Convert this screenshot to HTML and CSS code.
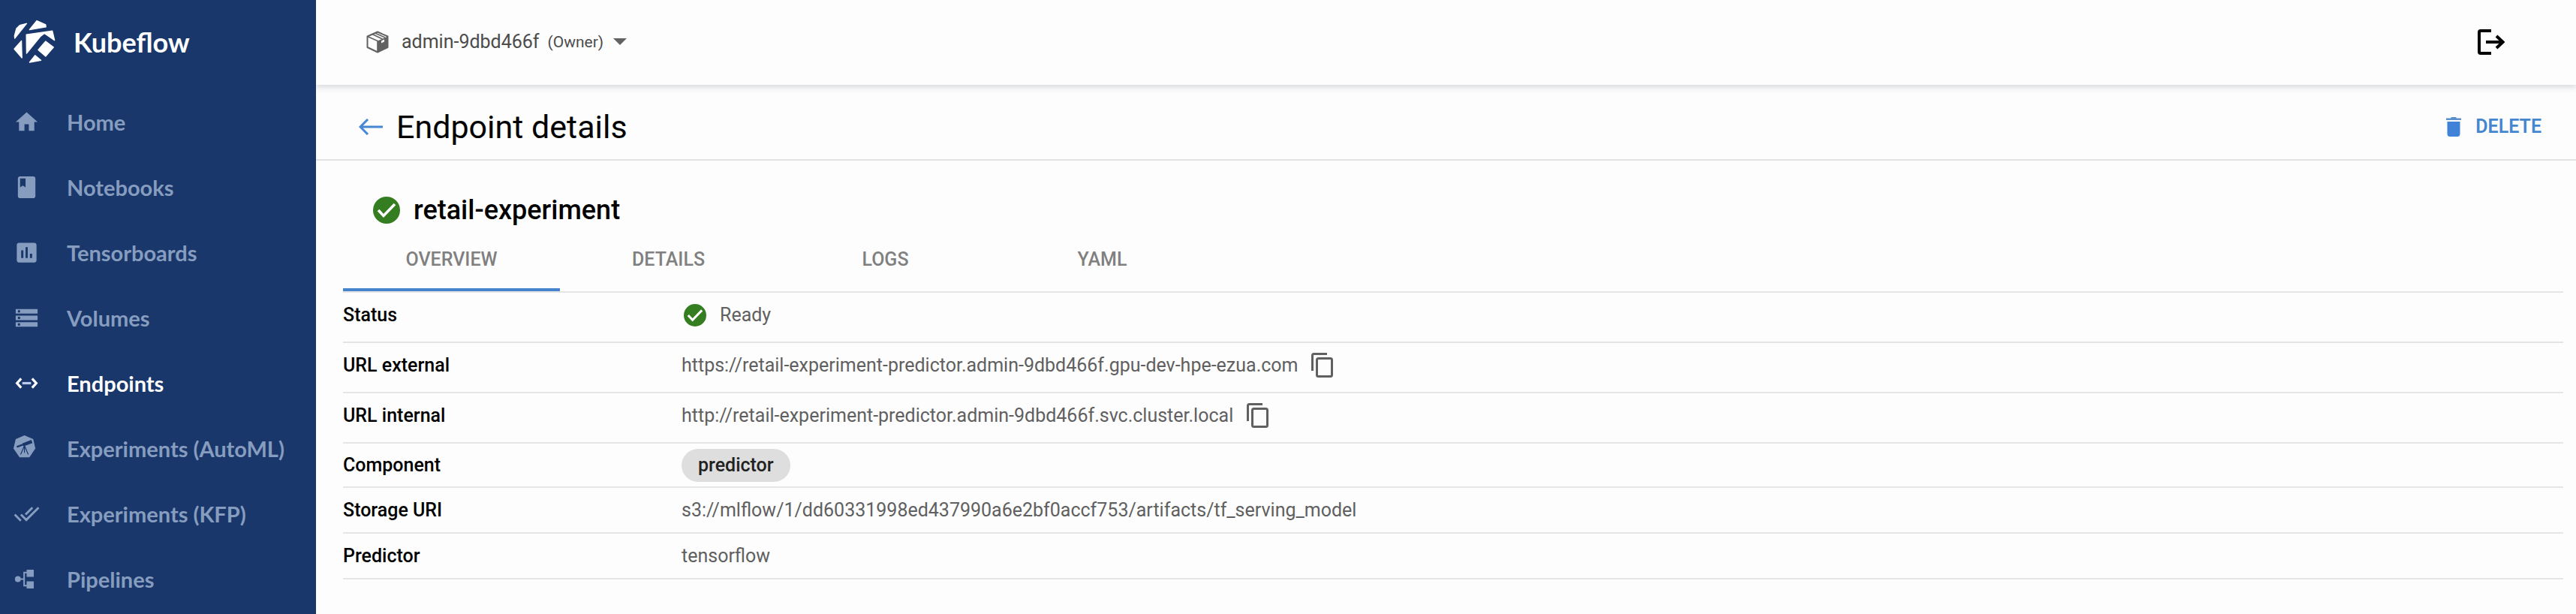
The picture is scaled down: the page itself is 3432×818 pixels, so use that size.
FILE: index.html
```html
<!DOCTYPE html>
<html lang="en">
<head>
<meta charset="utf-8">
<title>Kubeflow - Endpoint details</title>
<link rel="stylesheet" href="styles.css">
</head>
<body>
<div class="app">
  <aside class="sidebar">
    <a class="brand" href="#">
      <svg class="brand-logo" viewBox="54 80 170 176" fill="currentColor" stroke="currentColor" stroke-width="4" stroke-linejoin="round" aria-hidden="true">
        <path d="M107 93L59 153L58 143L66 113L80 100Z"/>
        <path d="M148 82L184 98L185 107L119 118Z"/>
        <path d="M106 138L211 123L220 161L179 133L164 144L107 214Z"/>
        <path d="M86 163L88 232L57 196Z"/>
        <path d="M184 165L216 189L184 226L154 200Z"/>
        <path d="M141 222L165 242L119 250Z"/>
      </svg>
      <span>Kubeflow</span>
    </a>
    <nav class="nav">
      <a class="nav-item" href="#">
        <svg class="nav-icon" viewBox="0 0 24 24" fill="currentColor" aria-hidden="true"><path d="M10 20v-6h4v6h5v-8h3L12 3 2 12h3v8z"/></svg>
        <span>Home</span>
      </a>
      <a class="nav-item" href="#">
        <svg class="nav-icon" viewBox="0 0 24 24" fill="currentColor" aria-hidden="true"><path d="M18 2H6c-1.100 0-2 .9-2 2v16c0 1.100.9 2 2 2h12c1.100 0 2-.9 2-2V4c0-1.100-.9-2-2-2zM6 4h5v8l-2.500-1.500L6 12V4z"/></svg>
        <span>Notebooks</span>
      </a>
      <a class="nav-item" href="#">
        <svg class="nav-icon" viewBox="0 0 24 24" fill="currentColor" aria-hidden="true"><path d="M19 3H5c-1.100 0-2 .9-2 2v14c0 1.100.9 2 2 2h14c1.100 0 2-.9 2-2V5c0-1.100-.9-2-2-2zM9 17H7v-7h2v7zm4 0h-2V7h2v10zm4 0h-2v-4h2v4z"/></svg>
        <span>Tensorboards</span>
      </a>
      <a class="nav-item" href="#">
        <svg class="nav-icon" viewBox="0 0 24 24" fill="currentColor" aria-hidden="true"><path d="M2 20h20v-4H2v4zm2-3h2v2H4v-2zM2 4v4h20V4H2zm4 3H4V5h2v2zm-4 7h20v-4H2v4zm2-3h2v2H4v-2z"/></svg>
        <span>Volumes</span>
      </a>
      <a class="nav-item active" href="#" aria-current="page">
        <svg class="nav-icon" viewBox="0 0 24 24" fill="none" stroke="currentColor" stroke-width="2.200" aria-hidden="true"><path d="M7 7.800L3.200 12L7 16.200M17 7.800L20.800 12L17 16.200"/><path d="M8 12h8" stroke="#b9cbe8"/></svg>
        <span>Endpoints</span>
      </a>
      <a class="nav-item" href="#">
        <svg class="nav-icon" viewBox="0 0 24 24" aria-hidden="true">
          <path fill="currentColor" d="M10 0L18 3.500L20 12L14.500 20H5.500L0 12L2 3.500Z"/>
          <g fill="none" stroke="#19376b"><path d="M3 10.500L10 8" stroke-width="1.600"/><path d="M8.500 8.700L16.800 5.600" stroke-width="3"/><path d="M10 9.500L6.500 17.500M10 9.500V16M10 9.500L13.500 17.500" stroke-width=".8"/></g>
        </svg>
        <span>Experiments (AutoML)</span>
      </a>
      <a class="nav-item" href="#">
        <svg class="nav-icon" viewBox="0 0 24 24" fill="currentColor" aria-hidden="true"><path d="M18 7l-1.410-1.410-6.340 6.340 1.410 1.410L18 7zm4.240-1.410L11.660 16.170 7.480 12l-1.410 1.410L11.660 19l12-12-1.420-1.410zM.410 13.410L6 19l1.410-1.410L1.830 12 .410 13.410z"/></svg>
        <span>Experiments (KFP)</span>
      </a>
      <a class="nav-item" href="#">
        <svg class="nav-icon" viewBox="0 0 24 24" fill="currentColor" aria-hidden="true"><circle cx="4" cy="12" r="2.700"/><path d="M12 3.500h6.500v6.500H12zM12 14h6.500v6.500H12z"/><path d="M5 12h4.500M13 6H9.700v12H13" fill="none" stroke="currentColor" stroke-width="1.400"/></svg>
        <span>Pipelines</span>
      </a>
    </nav>
  </aside>

  <div class="main">
    <header class="topbar">
      <button class="namespace" type="button">
        <svg class="cube" viewBox="0 0 30 30" aria-hidden="true">
          <path d="M15 1.500L28.500 7.500V22L15 28.500L1.500 22V7.500Z" fill="none" stroke="currentColor" stroke-width="2" stroke-linejoin="round"/>
          <path d="M15 13.500L28.500 7.500V22L15 28.500Z" fill="currentColor"/>
          <path d="M1.500 7.500L15 13.500V28M8 4.500L21.500 11M11.500 3L25 9" fill="none" stroke="currentColor" stroke-width="1.600"/>
          <path d="M20 13.500L24 11.500V14.500L20 16.500Z" fill="#fdfdfd"/>
        </svg>
        <span class="ns-name">admin-9dbd466f</span>
        <span class="ns-role">(Owner)</span>
        <svg class="caret" viewBox="0 0 18 9" fill="currentColor" aria-hidden="true"><path d="M0 0H18L9 9Z"/></svg>
      </button>
      <button class="logout" type="button" aria-label="Log out">
        <svg viewBox="0 0 36 34" fill="none" stroke="currentColor" stroke-width="4" aria-hidden="true"><path d="M18 2H4Q2 2 2 4V30Q2 32 4 32H18M11 17H33M25 9L33.500 17L25 25"/></svg>
      </button>
    </header>

    <div class="titlebar">
      <button class="back" type="button" aria-label="Back">
        <svg viewBox="0 0 32 22" fill="none" stroke="currentColor" stroke-width="3" aria-hidden="true"><path d="M32 11H2M12 1L2 11L12 21"/></svg>
      </button>
      <h1 class="page-title">Endpoint details</h1>
      <button class="delete" type="button">
        <svg viewBox="0 0 20 26" aria-hidden="true"><path d="M1.500 6H18.500V22Q18.500 26 15 26H5Q1.500 26 1.500 22Z" fill="#3f82d8"/><path d="M0 1.500H6L7 0H13L14 1.500H20V4H0Z" fill="#5b8fce"/></svg>
        <span>DELETE</span>
      </button>
    </div>

    <main class="content">
      <div class="endpoint">
        <svg class="status-lg" viewBox="0 0 36 36" aria-hidden="true"><circle cx="18" cy="18" r="18" fill="#347d20"/><path d="M7 18L14 25.500L29 10" fill="none" stroke="#fff" stroke-width="3.600"/></svg>
        <h2 class="endpoint-name">retail-experiment</h2>
      </div>
      <div class="tabs" role="tablist">
        <button class="tab selected" type="button" role="tab" aria-selected="true">OVERVIEW</button>
        <button class="tab" type="button" role="tab">DETAILS</button>
        <button class="tab" type="button" role="tab">LOGS</button>
        <button class="tab" type="button" role="tab">YAML</button>
      </div>
      <table class="details">
        <tbody>
          <tr class="tall">
            <th scope="row">Status</th>
            <td><div class="value"><svg class="status-sm" viewBox="0 0 36 36" aria-hidden="true"><circle cx="18" cy="18" r="18" fill="#347d20"/><path d="M7 18L14 25.500L29 10" fill="none" stroke="#fff" stroke-width="3.600"/></svg><span>Ready</span></div></td>
          </tr>
          <tr class="tall">
            <th scope="row">URL external</th>
            <td><div class="value"><span>https://retail-experiment-predictor.admin-9dbd466f.gpu-dev-hpe-ezua.com</span><button class="copy" type="button" aria-label="Copy external URL"><svg viewBox="0 0 29 33" fill="none" stroke="currentColor" stroke-width="3" aria-hidden="true"><path d="M21 1.500H3.500Q1.500 1.500 1.500 3.500V24"/><rect x="7.500" y="7.500" width="20" height="24" rx="2"/></svg></button></div></td>
          </tr>
          <tr class="tall">
            <th scope="row">URL internal</th>
            <td><div class="value"><span>http://retail-experiment-predictor.admin-9dbd466f.svc.cluster.local</span><button class="copy" type="button" aria-label="Copy internal URL"><svg viewBox="0 0 29 33" fill="none" stroke="currentColor" stroke-width="3" aria-hidden="true"><path d="M21 1.500H3.500Q1.500 1.500 1.500 3.500V24"/><rect x="7.500" y="7.500" width="20" height="24" rx="2"/></svg></button></div></td>
          </tr>
          <tr class="short">
            <th scope="row">Component</th>
            <td><span class="chip">predictor</span></td>
          </tr>
          <tr>
            <th scope="row">Storage URI</th>
            <td>s3://mlflow/1/dd60331998ed437990a6e2bf0accf753/artifacts/tf_serving_model</td>
          </tr>
          <tr>
            <th scope="row">Predictor</th>
            <td>tensorflow</td>
          </tr>
        </tbody>
      </table>
    </main>
  </div>
</div>
</body>
</html>
```
FILE: styles.css
```css
* {
  box-sizing: border-box;
}

body {
  margin: 0;
  background: #fdfdfd;
  color: #000;
  font-family: Roboto, "Liberation Sans", sans-serif;
  font-size: 25px;
  line-height: 32px;
}

button {
  padding: 0;
  border: 0;
  background: none;
  color: inherit;
  font: inherit;
  cursor: pointer;
}

svg {
  display: block;
  flex: none;
}

.app {
  display: flex;
  min-height: 100vh;
}

/* Sidebar */

.sidebar {
  flex: none;
  width: 421px;
  background: #19376b;
  font-family: Lato, "Open Sans", sans-serif;
  font-weight: 700;
}

.brand {
  display: flex;
  align-items: center;
  gap: 24px;
  height: 112px;
  padding-left: 18px;
  color: #fff;
  font-size: 36px;
  text-decoration: none;
}

.brand-logo {
  width: 56px;
  height: 58px;
}

.nav {
  display: flex;
  flex-direction: column;
  padding-top: 7px;
}

.nav-item {
  display: flex;
  align-items: center;
  gap: 36px;
  height: 87px;
  padding-left: 18px;
  color: #879dbf;
  font-size: 29px;
  text-decoration: none;
}

.nav-item.active {
  color: #fff;
}

.nav-icon {
  width: 35px;
  height: 35px;
}

/* Top bars */

.main {
  flex: 1;
  min-width: 0;
}

.topbar {
  display: flex;
  align-items: center;
  justify-content: space-between;
  height: 113px;
  padding: 0 95px 2px 67px;
  box-shadow: 0 2px 8px 1px rgba(40, 50, 70, 0.18);
  clip-path: inset(0 0 -16px 0);
}

.namespace {
  display: flex;
  align-items: center;
  color: #4c4c4c;
}

.cube {
  width: 30px;
  height: 30px;
  margin-right: 17px;
  color: #626262;
}

.ns-role {
  margin-left: 11px;
  font-size: 21px;
}

.caret {
  width: 18px;
  height: 9px;
  margin-left: 13px;
  color: #626262;
}

.logout svg {
  width: 36px;
  height: 34px;
}

.titlebar {
  display: flex;
  align-items: center;
  height: 101px;
  padding: 12px 46px 0 57px;
  border-bottom: 2px solid #e2e2e4;
}

.back {
  color: #4587d3;
}

.back svg {
  width: 32px;
  height: 22px;
}

.page-title {
  margin: 0 0 0 18px;
  font-size: 43px;
  font-weight: 400;
  line-height: 52px;
}

.delete {
  display: flex;
  align-items: center;
  gap: 19px;
  margin-left: auto;
  color: #4587cf;
  font-weight: 600;
}

.delete svg {
  width: 20px;
  height: 26px;
}

/* Endpoint content */

.content {
  padding: 42px 17px 0 36px;
}

.endpoint {
  display: flex;
  align-items: center;
  gap: 18px;
  padding-left: 40px;
}

.status-lg {
  width: 36px;
  height: 36px;
}

.endpoint-name {
  margin: 0;
  font-size: 36px;
  font-weight: 500;
  line-height: 48px;
}

.tabs {
  display: flex;
  border-bottom: 2px solid #e5e5e5;
}

.tab {
  width: 289px;
  height: 84px;
  border-top: 4px solid transparent;
  border-bottom: 4px solid transparent;
  color: #808080;
  font-weight: 500;
}

.tab.selected {
  border-bottom-color: #4583cc;
}

.details {
  width: 100%;
  border-collapse: separate;
  border-spacing: 0;
  table-layout: fixed;
}

.details th,
.details td {
  height: 61px;
  padding: 0;
  border-bottom: 2px solid #e5e5e5;
  text-align: left;
  vertical-align: middle;
}

.details th {
  width: 451px;
  font-weight: 500;
}

.details td {
  color: #606060;
}

.details .tall th,
.details .tall td {
  height: 67px;
  padding-bottom: 6px;
}

.details .short th,
.details .short td {
  height: 59px;
}

.value {
  display: flex;
  align-items: center;
  gap: 18px;
}

.status-sm {
  width: 30px;
  height: 30px;
  margin-left: 3px;
}

.copy {
  color: #606060;
}

.copy svg {
  width: 29px;
  height: 33px;
}

.chip {
  display: inline-block;
  padding: 6px 22px;
  border-radius: 22px;
  background: #dedede;
  color: #222;
  font-weight: 500;
  vertical-align: middle;
}
```
